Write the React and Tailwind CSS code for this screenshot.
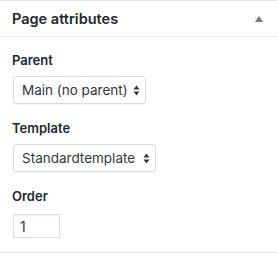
const Chevrons = () => (
  <svg width="7" height="11" viewBox="0 0 7 11" className="shrink-0">
    <path d="M3.5 0.5 L6.5 4.5 H0.5 Z" fill="#32373c" />
    <path d="M3.5 10.5 L6.5 6.5 H0.5 Z" fill="#32373c" />
  </svg>
);

const Select = ({ label, width }) => (
  <div
    className={`flex h-[28px] ${width} items-center justify-between rounded-[3px] border border-[#dcdcdc] bg-white pl-[8px] pr-[5px] text-[13.5px] text-[#32373c] shadow-[0_1px_1px_rgba(0,0,0,0.06)]`}
  >
    <span>{label}</span>
    <Chevrons />
  </div>
);

export default function App() {
  return (
    <div className="h-[253px] w-[277px] bg-white font-['Inter',sans-serif] text-[#23282d]">
      <div className="h-[253px] border-y border-[#e5e5e5]">
        <div className="flex h-[36px] items-center justify-between border-b border-[#eeeeee] pl-[12px] pr-[14px]">
          <span className="text-[14.5px] font-semibold">Page attributes</span>
          <svg width="8" height="6" viewBox="0 0 8 6">
            <path d="M4 0 L8 6 H0 Z" fill="#72777c" />
          </svg>
        </div>
        <div className="px-[12px] pt-[15px]">
          <div className="text-[13px] font-semibold leading-[16px]">Parent</div>
          <div className="mt-[8px] pl-[1px]">
            <Select label="Main (no parent)" width="w-[133px]" />
          </div>
          <div className="mt-[16px] text-[13px] font-semibold leading-[16px]">Template</div>
          <div className="mt-[8px] pl-[1px]">
            <Select label="Standardtemplate" width="w-[143px]" />
          </div>
          <div className="mt-[16px] text-[13px] font-semibold leading-[16px]">Order</div>
          <div className="mt-[10px] pl-[1px]">
            <div className="flex h-[24px] w-[47px] items-center border border-[#dddddd] pl-[6px] text-[14px] text-[#32373c] shadow-[inset_0_1px_2px_rgba(0,0,0,0.07)]">
              1
            </div>
          </div>
        </div>
      </div>
    </div>
  );
}
